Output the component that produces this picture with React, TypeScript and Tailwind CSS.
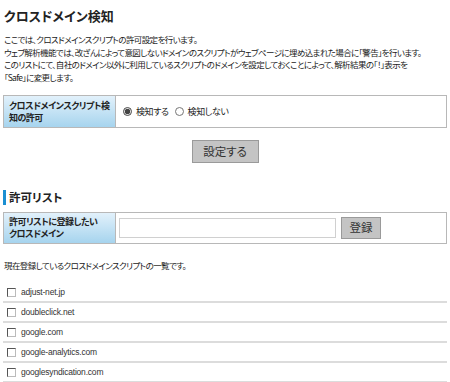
import { useState } from 'react'

const domains = [
  'adjust-net.jp',
  'doubleclick.net',
  'google.com',
  'google-analytics.com',
  'googlesyndication.com',
]

export default function App() {
  const [detect, setDetect] = useState(true)

  return (
    <div className="w-[450px] h-[382px] overflow-hidden bg-white px-[3px] text-[#222] font-['Noto_Sans_CJK_JP',sans-serif] [font-feature-settings:'palt']">
      <h1 className="pt-[8px] pl-[1px] text-[13px] font-bold leading-[16px]">クロスドメイン検知</h1>

      <div className="mt-[9px] whitespace-nowrap pl-[1px] text-[8.5px] leading-[12.5px] tracking-[-0.6px]">
        <p>ここでは、クロスドメインスクリプトの許可設定を行います。</p>
        <p>
          ウェブ解析機能では、改ざんによって意図しないドメインのスクリプトがウェブページに埋め込まれた場合に「警告」を行います。
        </p>
        <p>
          このリストにて、自社のドメイン以外に利用しているスクリプトのドメインを設定しておくことによって、解析結果の「！」表示を
        </p>
        <p>「Safe」に変更します。</p>
      </div>

      {/* detection setting */}
      <div className="mt-[12px] flex h-[33px] border border-[#b8b8b8]">
        <div className="flex w-[112px] items-center whitespace-nowrap border-r border-[#b8b8b8] bg-gradient-to-b from-[#e2f1fb] to-[#a6d4ee] px-[5px] text-[9px] font-bold leading-[12px] tracking-[-0.5px]">
          <span>
            クロスドメインスクリプト検
            <br />
            知の許可
          </span>
        </div>
        <div className="flex items-center gap-[3px] pl-[7px] text-[9px] tracking-[-0.4px]">
          <label className="flex items-center gap-[4px]">
            <input
              type="radio"
              checked={detect}
              onChange={() => setDetect(true)}
              className="m-0 h-[9px] w-[9px] accent-[#444]"
            />
            検知する
          </label>
          <label className="ml-[3px] flex items-center gap-[4px]">
            <input
              type="radio"
              checked={!detect}
              onChange={() => setDetect(false)}
              className="m-0 h-[9px] w-[9px] accent-[#444]"
            />
            検知しない
          </label>
        </div>
      </div>

      <div className="mt-[12px] flex justify-center">
        <button className="h-[23px] w-[67px] border border-[#9a9a9a] bg-[#c4c4c4] text-[11.5px] text-[#333]">
          設定する
        </button>
      </div>

      {/* allow list */}
      <div className="mt-[27px] flex h-[15px] items-center border-l-[3px] border-[#1b8fd2] pl-[3px] text-[11.5px] font-bold">
        許可リスト
      </div>

      <div className="mt-[7px] flex h-[32px] border border-[#b8b8b8]">
        <div className="flex w-[112px] items-center whitespace-nowrap border-r border-[#b8b8b8] bg-gradient-to-b from-[#e2f1fb] to-[#a6d4ee] px-[5px] text-[9px] font-bold leading-[12px] tracking-[-0.5px]">
          <span>
            許可リストに登録したい
            <br />
            クロスドメイン
          </span>
        </div>
        <div className="flex items-center pl-[3px]">
          <input className="h-[20px] w-[217px] border border-[#d0d0d0] bg-white outline-none" />
          <button className="ml-[5px] h-[22px] w-[40px] border border-[#9a9a9a] bg-[#c4c4c4] text-[11.5px] text-[#333]">
            登録
          </button>
        </div>
      </div>

      <p className="mt-[15px] pl-[1px] text-[8.5px] leading-[12px] tracking-[-0.6px]">
        現在登録しているクロスドメインスクリプトの一覧です。
      </p>

      <ul className="mt-[12px]">
        {domains.map((d) => (
          <li
            key={d}
            className="flex h-[20px] items-center border-b-2 border-[#dcdcdc] pl-[4px] font-['Liberation_Sans',sans-serif] text-[8.5px] tracking-[-0.2px] text-[#333]"
          >
            <span className="mr-[5px] inline-block h-[9px] w-[9px] border border-[#555] border-b-[#bbb] border-r-[#bbb]" />
            {d}
          </li>
        ))}
      </ul>
    </div>
  )
}
